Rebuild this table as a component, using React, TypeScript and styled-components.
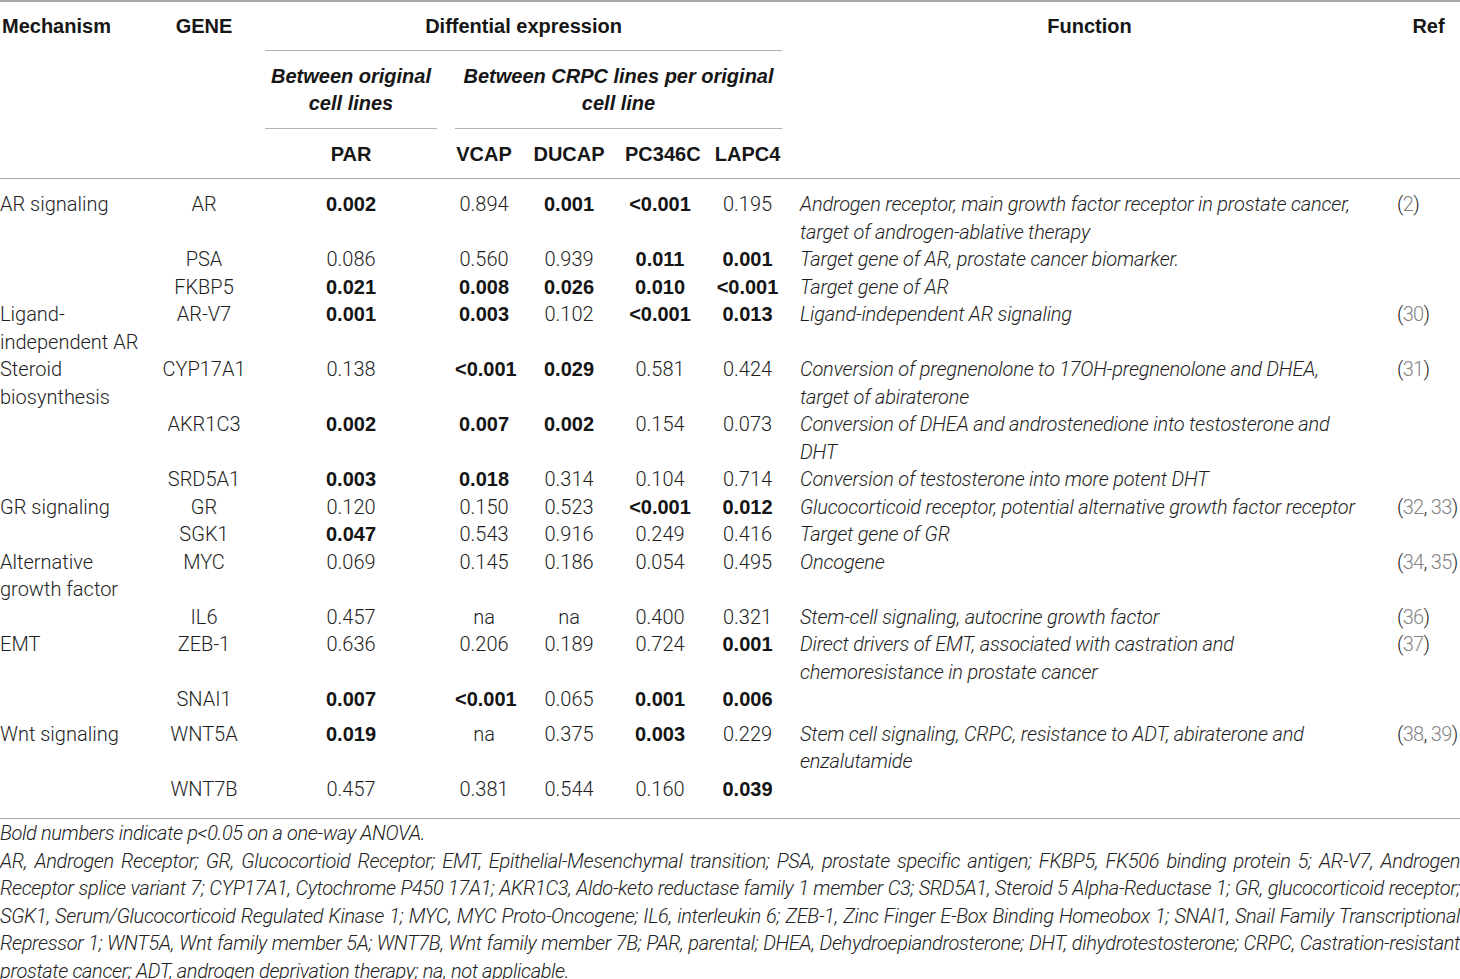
import React from 'react';
import styled, { createGlobalStyle } from 'styled-components';

// Row data: values ending with '*' are significant (bold)
interface Row {
	mech?: string[];
	gene: string;
	values: string[];
	func?: string[];
	refs?: number[];
	gapAfter?: boolean;
}

const rows: Row[] = [
	{ mech: ['AR signaling'], gene: 'AR', values: ['0.002*', '0.894', '0.001*', '<0.001*', '0.195'], func: ['Androgen receptor, main growth factor receptor in prostate cancer,', 'target of androgen-ablative therapy'], refs: [2] },
	{ gene: 'PSA', values: ['0.086', '0.560', '0.939', '0.011*', '0.001*'], func: ['Target gene of AR, prostate cancer biomarker.'] },
	{ gene: 'FKBP5', values: ['0.021*', '0.008*', '0.026*', '0.010*', '<0.001*'], func: ['Target gene of AR'] },
	{ mech: ['Ligand-', 'independent AR'], gene: 'AR-V7', values: ['0.001*', '0.003*', '0.102', '<0.001*', '0.013*'], func: ['Ligand-independent AR signaling'], refs: [30] },
	{ mech: ['Steroid', 'biosynthesis'], gene: 'CYP17A1', values: ['0.138', '<0.001*', '0.029*', '0.581', '0.424'], func: ['Conversion of pregnenolone to 17OH-pregnenolone and DHEA,', 'target of abiraterone'], refs: [31] },
	{ gene: 'AKR1C3', values: ['0.002*', '0.007*', '0.002*', '0.154', '0.073'], func: ['Conversion of DHEA and androstenedione into testosterone and', 'DHT'] },
	{ gene: 'SRD5A1', values: ['0.003*', '0.018*', '0.314', '0.104', '0.714'], func: ['Conversion of testosterone into more potent DHT'] },
	{ mech: ['GR signaling'], gene: 'GR', values: ['0.120', '0.150', '0.523', '<0.001*', '0.012*'], func: ['Glucocorticoid receptor, potential alternative growth factor receptor'], refs: [32, 33] },
	{ gene: 'SGK1', values: ['0.047*', '0.543', '0.916', '0.249', '0.416'], func: ['Target gene of GR'] },
	{ mech: ['Alternative', 'growth factor'], gene: 'MYC', values: ['0.069', '0.145', '0.186', '0.054', '0.495'], func: ['Oncogene'], refs: [34, 35] },
	{ gene: 'IL6', values: ['0.457', 'na', 'na', '0.400', '0.321'], func: ['Stem-cell signaling, autocrine growth factor'], refs: [36] },
	{ mech: ['EMT'], gene: 'ZEB-1', values: ['0.636', '0.206', '0.189', '0.724', '0.001*'], func: ['Direct drivers of EMT, associated with castration and', 'chemoresistance in prostate cancer'], refs: [37] },
	{ gene: 'SNAI1', values: ['0.007*', '<0.001*', '0.065', '0.001*', '0.006*'], gapAfter: true },
	{ mech: ['Wnt signaling'], gene: 'WNT5A', values: ['0.019*', 'na', '0.375', '0.003*', '0.229'], func: ['Stem cell signaling, CRPC, resistance to ADT, abiraterone and', 'enzalutamide'], refs: [38, 39] },
	{ gene: 'WNT7B', values: ['0.457', '0.381', '0.544', '0.160', '0.039*'] },
];

const footLines = [
	'AR, Androgen Receptor; GR, Glucocortioid Receptor; EMT, Epithelial-Mesenchymal transition; PSA, prostate specific antigen; FKBP5, FK506 binding protein 5; AR-V7, Androgen',
	'Receptor splice variant 7; CYP17A1, Cytochrome P450 17A1; AKR1C3, Aldo-keto reductase family 1 member C3; SRD5A1, Steroid 5 Alpha-Reductase 1; GR, glucocorticoid receptor;',
	'SGK1, Serum/Glucocorticoid Regulated Kinase 1; MYC, MYC Proto-Oncogene; IL6, interleukin 6; ZEB-1, Zinc Finger E-Box Binding Homeobox 1; SNAI1, Snail Family Transcriptional',
	'Repressor 1; WNT5A, Wnt family member 5A; WNT7B, Wnt family member 7B; PAR, parental; DHEA, Dehydroepiandrosterone; DHT, dihydrotestosterone; CRPC, Castration-resistant',
	'prostate cancer; ADT, androgen deprivation therapy; na, not applicable.',
];

const colWidths = [152, 104, 190, 76, 94, 88, 87, 597, 72];

const GlobalStyle = createGlobalStyle`
  body {
    margin: 0;
    background: #ffffff;
    font-family: Roboto, "Liberation Sans", sans-serif;
    font-weight: 300;
    color: #1e1e1e;
  }
`;

const Page = styled.div`
  width: 1460px;
  font-size: 20px;
  line-height: 27.5px;
`;

const Table = styled.table`
  width: 1460px;
  table-layout: fixed;
  border-collapse: collapse;
  border-top: 2px solid #a5a5a5;
`;

const Head = styled.thead`
  border-bottom: 1.5px solid #a8a8a8;
`;

const Th = styled.th<{ $align?: string; $pt?: number; $pb?: number; $edge?: 'left' | 'right' }>`
  font-family: "Liberation Sans", Arial, sans-serif;
  font-weight: 700;
  color: #161616;
  text-align: ${(p) => p.$align || 'center'};
  vertical-align: top;
  padding: ${(p) => p.$pt ?? 11}px ${(p) => (p.$edge === 'right' ? 0 : 9)}px ${(p) => p.$pb ?? 0}px
    ${(p) => (p.$edge === 'left' ? 2 : 9)}px;
`;

const GroupTh = styled.th<{ $pt: number }>`
  padding: ${(p) => p.$pt}px 0 0;
  vertical-align: top;
  font-family: "Liberation Sans", Arial, sans-serif;
  font-weight: 700;
  color: #161616;
`;

const GroupLabel = styled.div<{ $pb: number; $italic?: boolean }>`
  margin: 0 9px;
  padding-bottom: ${(p) => p.$pb}px;
  border-bottom: 1.5px solid #b4b4b4;
  text-align: center;
  font-style: ${(p) => (p.$italic ? 'italic' : 'normal')};
`;

const Td = styled.td<{ $align?: string; $pt: number; $pb: number; $edge?: 'left' | 'right'; $italic?: boolean }>`
  vertical-align: top;
  text-align: ${(p) => p.$align || 'center'};
  padding: ${(p) => p.$pt}px ${(p) => (p.$edge === 'right' ? 0 : 9)}px ${(p) => p.$pb}px
    ${(p) => (p.$edge === 'left' ? 0 : 9)}px;
  font-style: ${(p) => (p.$italic ? 'italic' : 'normal')};
  letter-spacing: ${(p) => (p.$italic ? '-0.2px' : p.$edge === 'right' ? '-0.7px' : '0')};
  white-space: nowrap;
`;

const Strong = styled.span`
  font-family: "Liberation Sans", Arial, sans-serif;
  font-weight: 700;
  color: #141414;
`;

const RefNum = styled.span`
  color: #858585;
`;

const Footer = styled.div`
  border-top: 1.5px solid #a8a8a8;
  padding-top: 1px;
  font-style: italic;
  color: #222;
  letter-spacing: -0.35px;
`;

const FootLine = styled.div<{ $justify?: boolean }>`
  text-align: ${(p) => (p.$justify ? 'justify' : 'left')};
  text-align-last: ${(p) => (p.$justify ? 'justify' : 'left')};
`;

const Value: React.FC<{ v: string }> = ({ v }) =>
	v.endsWith('*') ? <Strong>{v.slice(0, -1)}</Strong> : <>{v}</>;

const Lines: React.FC<{ lines?: string[] }> = ({ lines }) => (
	<>
		{(lines || []).map((l, i) => (
			<div key={i}>{l}</div>
		))}
	</>
);

const App: React.FC = () => (
	<Page>
		<GlobalStyle />
		<Table>
			<colgroup>
				{colWidths.map((w, i) => (
					<col key={i} style={{ width: w }} />
				))}
			</colgroup>
			<Head>
				<tr>
					<Th rowSpan={3} $align="left" $edge="left">Mechanism</Th>
					<Th rowSpan={3}>GENE</Th>
					<GroupTh colSpan={5} $pt={11}>
						<GroupLabel $pb={9}>Diffential expression</GroupLabel>
					</GroupTh>
					<Th rowSpan={3}>Function</Th>
					<Th rowSpan={3} $edge="right">Ref</Th>
				</tr>
				<tr>
					<GroupTh $pt={12}>
						<GroupLabel $pb={10} $italic>Between original cell lines</GroupLabel>
					</GroupTh>
					<GroupTh colSpan={4} $pt={12}>
						<GroupLabel $pb={10} $italic>
							Between CRPC lines per original
							<br />
							cell line
						</GroupLabel>
					</GroupTh>
				</tr>
				<tr>
					{['PAR', 'VCAP', 'DUCAP', 'PC346C', 'LAPC4'].map((h) => (
						<Th key={h} $pt={12} $pb={10}>{h}</Th>
					))}
				</tr>
			</Head>
			<tbody>
				{rows.map((r, i) => {
					const pt = i === 0 ? 12 : 0;
					const pb = i === rows.length - 1 ? 15 : r.gapAfter ? 7 : 0;
					return (
						<tr key={r.gene}>
							<Td $align="left" $edge="left" $pt={pt} $pb={pb}>
								<Lines lines={r.mech} />
							</Td>
							<Td $pt={pt} $pb={pb}>{r.gene}</Td>
							{r.values.map((v, j) => (
								<Td key={j} $pt={pt} $pb={pb}>
									<Value v={v} />
								</Td>
							))}
							<Td $align="left" $italic $pt={pt} $pb={pb}>
								<Lines lines={r.func} />
							</Td>
							<Td $align="left" $edge="right" $pt={pt} $pb={pb}>
								{r.refs && (
									<>
										(
										{r.refs.map((n, k) => (
											<React.Fragment key={n}>
												{k > 0 && ', '}
												<RefNum>{n}</RefNum>
											</React.Fragment>
										))}
										)
									</>
								)}
							</Td>
						</tr>
					);
				})}
			</tbody>
		</Table>
		<Footer>
			<FootLine>Bold numbers indicate p&lt;0.05 on a one-way ANOVA.</FootLine>
			{footLines.map((l, i) => (
				<FootLine key={i} $justify={i < footLines.length - 1}>{l}</FootLine>
			))}
		</Footer>
	</Page>
);

export default App;
